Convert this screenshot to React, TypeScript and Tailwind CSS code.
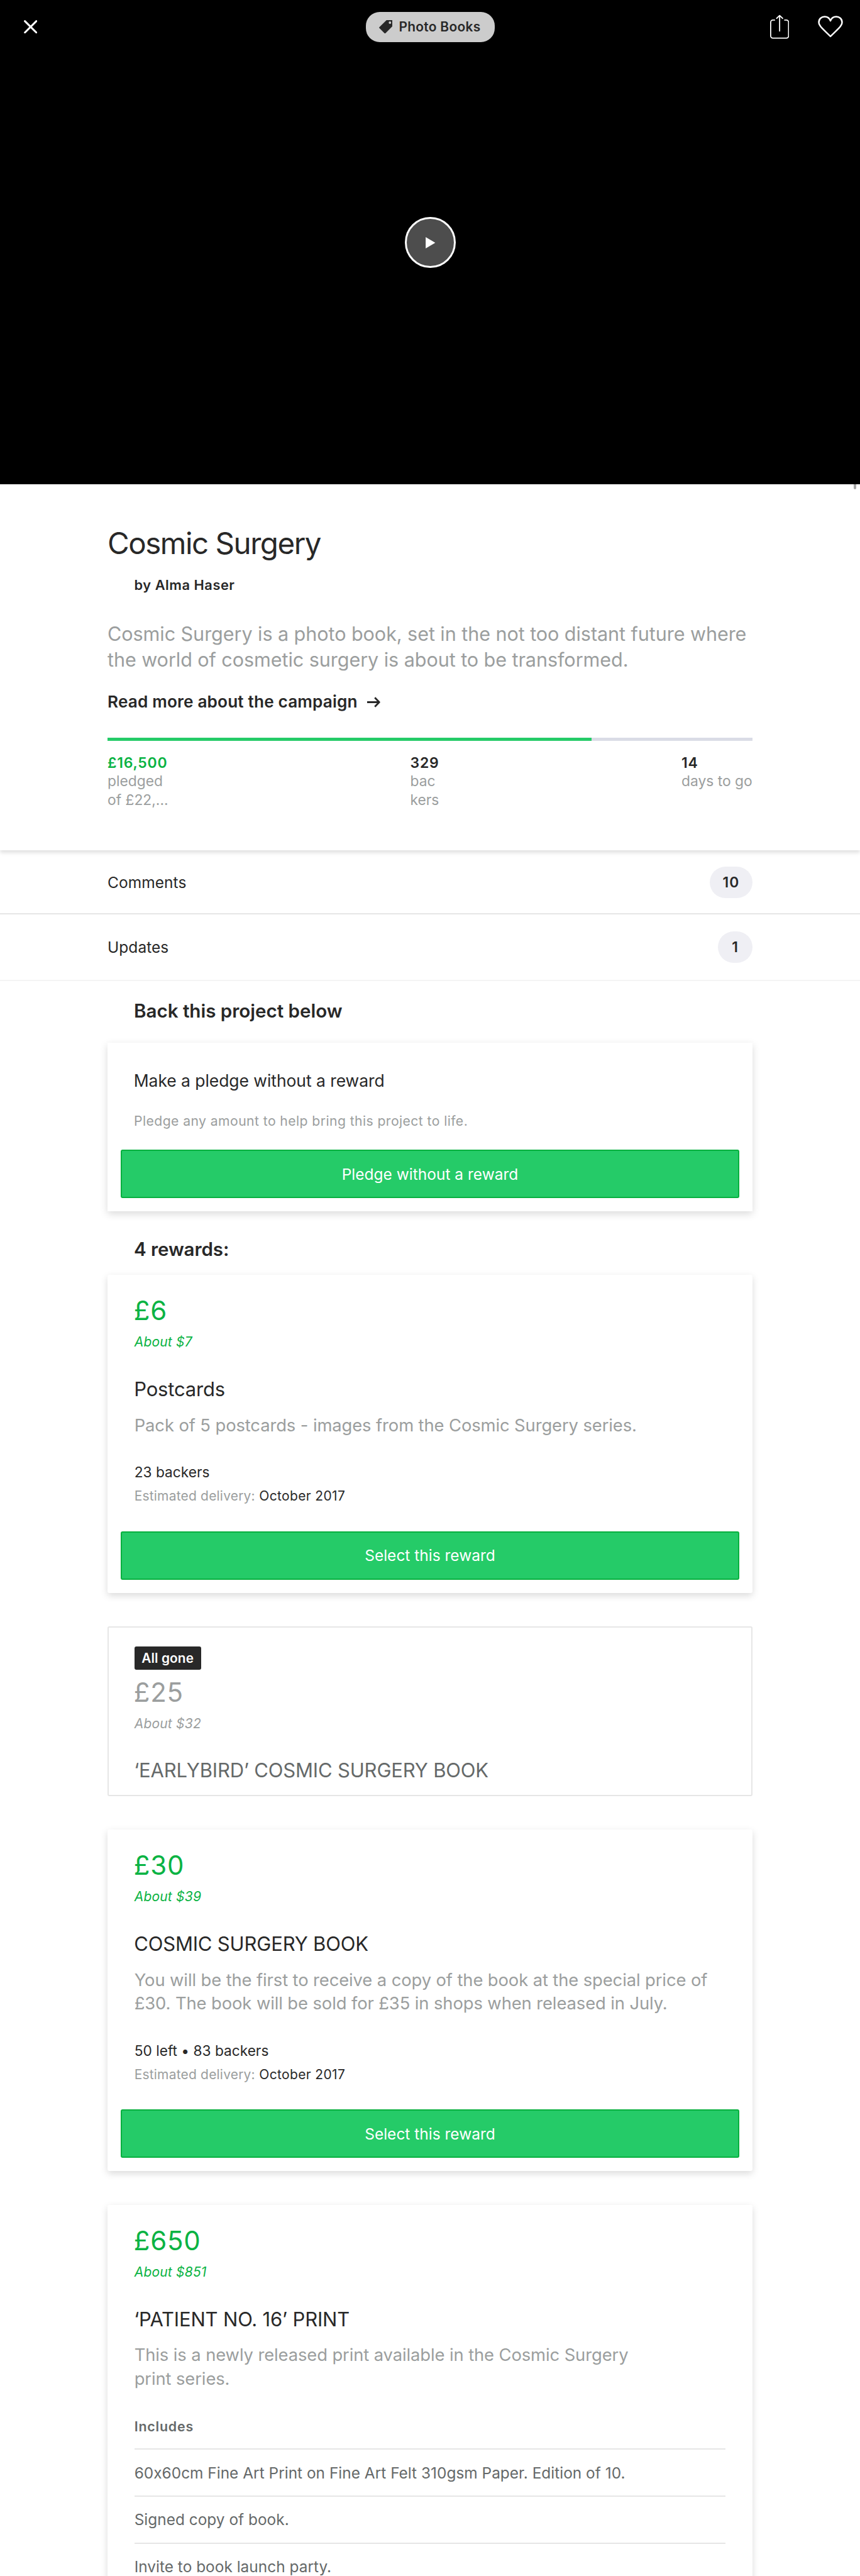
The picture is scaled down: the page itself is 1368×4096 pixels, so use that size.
import React from "react";

type Reward = {
  price: string;
  about: string;
  title: string;
  description?: string[];
  backers?: string;
  delivery?: string;
  gone?: boolean;
  includes?: string[];
};

const rewards: Reward[] = [
  {
    price: "£6",
    about: "About $7",
    title: "Postcards",
    description: ["Pack of 5 postcards - images from the Cosmic Surgery series."],
    backers: "23 backers",
    delivery: "October 2017",
  },
  { price: "£25", about: "About $32", title: "‘EARLYBIRD’ COSMIC SURGERY BOOK", gone: true },
  {
    price: "£30",
    about: "About $39",
    title: "COSMIC SURGERY BOOK",
    description: [
      "You will be the first to receive a copy of the book at the special price of",
      "£30. The book will be sold for £35 in shops when released in July.",
    ],
    backers: "50 left • 83 backers",
    delivery: "October 2017",
  },
  {
    price: "£650",
    about: "About $851",
    title: "‘PATIENT NO. 16’ PRINT",
    description: ["This is a newly released print available in the Cosmic Surgery", "print series."],
    includes: [
      "60x60cm Fine Art Print on Fine Art Felt 310gsm Paper. Edition of 10.",
      "Signed copy of book.",
      "Invite to book launch party.",
    ],
  },
];

function CloseIcon() {
  return (
    <svg className="h-[21.4px] w-[21.4px]" viewBox="0 0 24 24" fill="none" stroke="white" strokeWidth="3.4" strokeLinecap="round">
      <path d="M1.8 1.8 22.2 22.2M22.2 1.8 1.8 22.2" />
    </svg>
  );
}

function TagIcon() {
  return (
    <svg className="h-[21.4px] w-[21.4px]" viewBox="0 0 24 24" fill="#282828">
      <path fillRule="evenodd" d="M13.3 0H23a1 1 0 0 1 1 1v9.7L11.2 23.6a1 1 0 0 1-1.3 0L.4 14a1 1 0 0 1 0-1.3ZM19.4 2.2a2.2 2.2 0 1 0 0 4.4 2.2 2.2 0 0 0 0-4.4Z" />
    </svg>
  );
}

function ShareIcon() {
  return (
    <svg className="h-[39.2px] w-[30.3px]" viewBox="0 0 34 44" fill="none" stroke="white" strokeWidth="2" strokeLinecap="round" strokeLinejoin="round">
      <path d="M8 10H5a4 4 0 0 0-4 4v24.3a4 4 0 0 0 4 4h24a4 4 0 0 0 4-4V14a4 4 0 0 0-4-4h-3" />
      <path d="M17 2v27.5M11.6 7 17 1.8 22.4 7" />
    </svg>
  );
}

function HeartIcon() {
  return (
    <svg className="h-[34.7px] w-[40px]" viewBox="0 0 45 39" fill="none" stroke="white" strokeWidth="2.8" strokeLinejoin="round">
      <path d="M22.5 37C16.500 31 12 27 7.600 22.400 3.800 18.400 1.700 15.600 1.700 11.800 1.700 5.800 6.400 1.700 12 1.700c5 0 8.800 2.700 10.500 7.300C24.200 4.400 28 1.700 33 1.700c5.600 0 10.300 4.100 10.300 10.100 0 3.800-2.100 6.600-5.900 10.600C33 27 28.500 31 22.500 37Z" />
    </svg>
  );
}

function Hero() {
  return (
    <header className="flex h-[769.5px] flex-col bg-black">
      <div className="grid h-[85.500px] grid-cols-[1fr_205px_1fr] items-center">
        <button className="ml-[37.500px] w-fit"><CloseIcon /></button>
        <div className="flex h-[48px] w-[205px] items-center rounded-[22px] bg-[#cccccc] pl-[21.500px]">
          <TagIcon />
          <span className="pl-[10px] text-[20.9px] leading-[28px] font-semibold tracking-[0.3px] whitespace-nowrap text-[#282828]">Photo Books</span>
        </div>
        <div className="flex items-center justify-end gap-[46px] pr-[27px]">
          <button><ShareIcon /></button>
          <button><HeartIcon /></button>
        </div>
      </div>
      <div className="flex flex-1 items-center justify-center pb-[84.500px]">
        <button className="flex h-[81px] w-[81px] items-center justify-center rounded-full border-[3.500px] border-white bg-[#4d4d4d]">
          <svg className="ml-[2px] mt-[2px] h-[18px] w-[15.500px]" viewBox="0 0 17 20" fill="white"><path d="M0 0 17 10 0 20Z" /></svg>
        </button>
      </div>
    </header>
  );
}

function Stat({ value, lines, green }: { value: string; lines: string[]; green?: boolean }) {
  return (
    <div>
      <div className={`h-[29.1px] text-[23px] leading-[30.6px] font-semibold tracking-[0.75px] ${green ? "text-[#0ab343]" : ""}`}>{value}</div>
      {lines.map((l) => (
        <div key={l} className="text-[22.8px] leading-[30.6px] text-[#9b9e9e]">{l}</div>
      ))}
    </div>
  );
}

function Summary() {
  return (
    <section className="relative h-[582px] bg-white px-[171px] pt-[66px] shadow-[0_4px_6px_rgba(0,0,0,0.12)]">
      <div className="absolute top-0 right-[6px] h-[8.500px] w-[4px] rounded-b-sm bg-[#a6a6a6]" />
      <h1 className="text-[47.500px] leading-[56px] tracking-[-1.47px]">Cosmic Surgery</h1>
      <div className="mt-[23.9px] pl-[42.500px] text-[21.8px] leading-[30px] font-semibold tracking-[0.54px]">by Alma Haser</div>
      <p className="mt-[43px] text-[30.6px] leading-[40.9px] tracking-[-0.08px] whitespace-nowrap text-[#9b9e9e]">
        Cosmic Surgery is a photo book, set in the not too distant future where
        <br />
        the world of cosmetic surgery is about to be transformed.
      </p>
      <a className="mt-[28.8px] flex items-center gap-[15px] text-[26.2px] leading-[34px] font-semibold tracking-[0.15px]">
        Read more about the campaign
        <svg className="h-[17px] w-[21px]" viewBox="0 0 24 19" fill="none" stroke="currentColor" strokeWidth="3.2" strokeLinejoin="round">
          <path d="M0 9.500h21.500M14 1.300l8 8.200-8 8.200" />
        </svg>
      </a>
      <div className="mt-[40px] h-[5.300px] bg-[#dadce6]"><div className="h-full w-3/4 bg-[#25cb68]" /></div>
      <div className="mt-[19.4px] grid grid-cols-[481.500px_431.500px_1fr] whitespace-nowrap">
        <Stat value="£16,500" lines={["pledged", "of £22,..."]} green />
        <Stat value="329" lines={["bac", "kers"]} />
        <Stat value="14" lines={["days to go"]} />
      </div>
    </section>
  );
}

function LinkRow({ label, count, className }: { label: string; count: string; className: string }) {
  return (
    <div className={`flex items-center justify-between border-b-2 px-[171px] ${className}`}>
      <span className="text-[24.500px] leading-[32px] tracking-[0.05px]">{label}</span>
      <span className="flex h-[49.800px] min-w-[54.700px] items-center justify-center rounded-full bg-[#efeff4] px-[20.500px] text-[22.800px] font-semibold tracking-[1.2px]">{count}</span>
    </div>
  );
}

function GreenButton({ children, className }: { children: React.ReactNode; className: string }) {
  return (
    <button className={`mx-[21.4px] flex h-[76.6px] items-center justify-center rounded-[3px] border-2 border-[#08b03f] bg-[#25cb68] text-[24.500px] leading-[32px] text-white ${className}`}>
      {children}
    </button>
  );
}

function RewardCard({ reward }: { reward: Reward }) {
  const { gone } = reward;
  return (
    <article className={`mb-[53.500px] flex flex-col rounded-[3px] bg-white ${gone ? "h-[269.4px] border-2 border-[#e6e6e6] pt-[30px]" : "pt-[32.300px] pb-[21.300px] shadow-[0_4px_12px_rgba(0,0,0,0.15)]"}`}>
      <div className={`flex flex-col items-start whitespace-nowrap ${gone ? "px-[40.700px]" : "px-[42.700px]"}`}>
        {gone && (
          <span className="mb-[11px] flex h-[36.6px] w-[106px] items-center justify-center rounded-[3px] bg-[#282828] text-[20.800px] leading-[28px] font-semibold tracking-[0.1px] text-white">All gone</span>
        )}
        <div className={`-ml-[1px] text-[42px] leading-[50px] tracking-[0.8px] ${gone ? "text-[#9b9e9e]" : "text-[#0ab343]"}`}>{reward.price}</div>
        <div className={`mt-[11px] text-[21px] leading-[28px] tracking-[0.2px] italic ${gone ? "text-[#9b9e9e]" : "text-[#0ab343]"}`}>{reward.about}</div>
        <h3 className={`mt-[41.6px] -ml-[0.500px] text-[31px] leading-[38px] tracking-[-0.18px] ${gone ? "text-[#656969]" : ""}`}>{reward.title}</h3>
        {reward.description && (
          <div className="mt-[19.700px] text-[27.4px] leading-[37.4px] tracking-[-0.11px] text-[#9b9e9e]">
            {reward.description.map((d) => <p key={d}>{d}</p>)}
          </div>
        )}
        {reward.backers && <div className="mt-[41.1px] text-[22.700px] leading-[30px]">{reward.backers}</div>}
        {reward.delivery && (
          <div className="mt-[9.1px] flex gap-[6.500px] text-[21px] leading-[28px]">
            <span className="tracking-[0.19px] text-[#9b9e9e]">Estimated delivery:</span>
            <span className="tracking-[0.35px]">{reward.delivery}</span>
          </div>
        )}
        {reward.includes && (
          <div className="mt-[42.300px] w-full text-[#656969]">
            <div className="text-[21.4px] leading-[28px] font-semibold tracking-[0.8px]">Includes</div>
            <ul className="mt-[21.700px]">
              {reward.includes.map((i) => (
                <li key={i} className="flex h-[74.800px] items-center border-t-2 border-[#e6e6e6] text-[24.4px] leading-[32px] tracking-[0.02px]">{i}</li>
              ))}
            </ul>
          </div>
        )}
      </div>
      {reward.backers && <GreenButton className="mt-[41.700px]">Select this reward</GreenButton>}
    </article>
  );
}

export default function App() {
  return (
    <div className="h-[4096px] w-[1368px] overflow-hidden bg-white font-['Inter',sans-serif] text-[#282828] [font-feature-settings:'calt'_0]">
      <Hero />
      <Summary />
      <LinkRow label="Comments" count="10" className="h-[102.9px] border-[#e6e6e6] pt-[2px]" />
      <LinkRow label="Updates" count="1" className="h-[105.2px] border-[#f4f4f4]" />
      <main className="px-[171px]">
        <h2 className="mt-[28.500px] pl-[42px] text-[29.6px] leading-[38px] font-semibold tracking-[-0.03px]">Back this project below</h2>
        <section className="mt-[32.200px] flex h-[268px] flex-col bg-white pt-[42.9px] shadow-[0_4px_12px_rgba(0,0,0,0.15)]">
          <h3 className="pl-[41.700px] text-[26.500px] leading-[34px] tracking-[-0.06px]">Make a pledge without a reward</h3>
          <p className="mt-[33.300px] pl-[42px] text-[21.2px] leading-[28px] tracking-[0.41px] text-[#9b9e9e]">Pledge any amount to help bring this project to life.</p>
          <GreenButton className="mt-[31.9px]">Pledge without a reward</GreenButton>
        </section>
        <h2 className="mt-[41.200px] mb-[21.6px] pl-[42px] text-[29.6px] leading-[38px] font-semibold tracking-[-0.1px]">4 rewards:</h2>
        {rewards.map((r) => <RewardCard key={r.price} reward={r} />)}
      </main>
    </div>
  );
}
